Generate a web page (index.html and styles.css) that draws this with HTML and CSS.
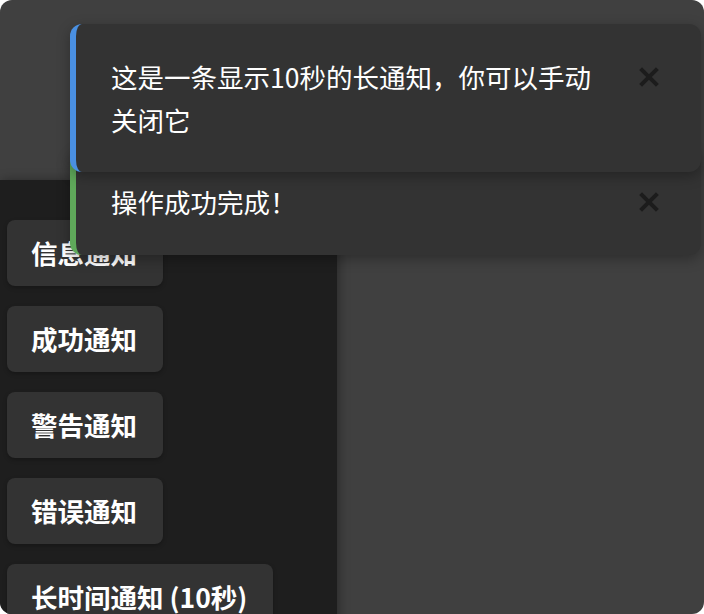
FILE: index.html
```html
<!DOCTYPE html>
<html lang="zh-CN">

<head>
    <meta charset="UTF-8">
    <meta name="viewport" content="width=device-width, initial-scale=1.0">
    <title>通知演示</title>
    <link rel="stylesheet" href="styles.css">
</head>

<body>
    <div class="app">
        <div class="topbar"></div>

        <aside class="sidebar">
            <button class="btn">信息通知</button>
            <button class="btn">成功通知</button>
            <button class="btn">警告通知</button>
            <button class="btn">错误通知</button>
            <button class="btn">长时间通知 (10秒)</button>
        </aside>

        <main class="main"></main>

        <div class="toasts">
            <div class="toast toast-info">
                <p class="toast-text">这是一条显示10秒的长通知，你可以手动关闭它</p>
                <button class="toast-close" aria-label="关闭">
                    <svg viewBox="0 0 20 20" width="24" height="24">
                        <path d="M3 3 L17 17 M17 3 L3 17" />
                    </svg>
                </button>
            </div>
            <div class="toast toast-success">
                <p class="toast-text">操作成功完成！</p>
                <button class="toast-close" aria-label="关闭">
                    <svg viewBox="0 0 20 20" width="24" height="24">
                        <path d="M3 3 L17 17 M17 3 L3 17" />
                    </svg>
                </button>
            </div>
        </div>
    </div>
</body>

</html>
```

FILE: styles.css
```css
html,
body {
    margin: 0;
    padding: 0;
    background-color: #fff;
}

body {
    font-family: "Noto Sans CJK SC", "Noto Sans", sans-serif;
    color: #fff;
}

.app {
    position: relative;
    display: grid;
    grid-template-columns: 337px 1fr;
    grid-template-rows: 180px 1fr;
    width: 704px;
    height: 614px;
    overflow: hidden;
    border-radius: 12px;
    background-color: #404040;
}

.topbar {
    grid-column: 1 / 3;
}

.sidebar {
    display: flex;
    flex-direction: column;
    align-items: flex-start;
    gap: 20px;
    padding: 40px 7px 0;
    background-color: #1e1e1e;
    box-shadow: 2px 0 10px rgba(0, 0, 0, 0.35);
    z-index: 1;
}

.btn {
    font-family: inherit;
    font-size: 26.5px;
    font-weight: bold;
    line-height: 38px;
    color: #fff;
    background-color: #333;
    border: none;
    border-radius: 8px;
    padding: 14px 26px 14px 24px;
    box-shadow: 0 2px 4px rgba(0, 0, 0, 0.25);
    white-space: nowrap;
    cursor: pointer;
}

.toasts {
    position: absolute;
    top: 24px;
    left: 70px;
    width: 631px;
    display: flex;
    flex-direction: column;
    z-index: 5;
}

.toast {
    display: flex;
    align-items: flex-start;
    gap: 30px;
    padding: 32px 40px 31px 35px;
    background-color: #333;
    border-left: 6px solid #4a90e2;
    border-radius: 12px;
    box-shadow: 0 4px 14px rgba(0, 0, 0, 0.3);
}

.toast-info {
    position: relative;
    z-index: 2;
}

.toast-success {
    margin-top: -23px;
    border-left-color: #5fa85a;
}

.toast-text {
    flex: 1;
    margin: 0;
    font-size: 26.5px;
    line-height: 42.5px;
}

.toast-close {
    display: flex;
    align-items: center;
    justify-content: center;
    width: 24px;
    height: 42px;
    padding: 0;
    background: none;
    border: none;
    cursor: pointer;
}

.toast-close svg {
    fill: none;
    stroke: #1c1c1c;
    stroke-width: 3.4;
}
```
